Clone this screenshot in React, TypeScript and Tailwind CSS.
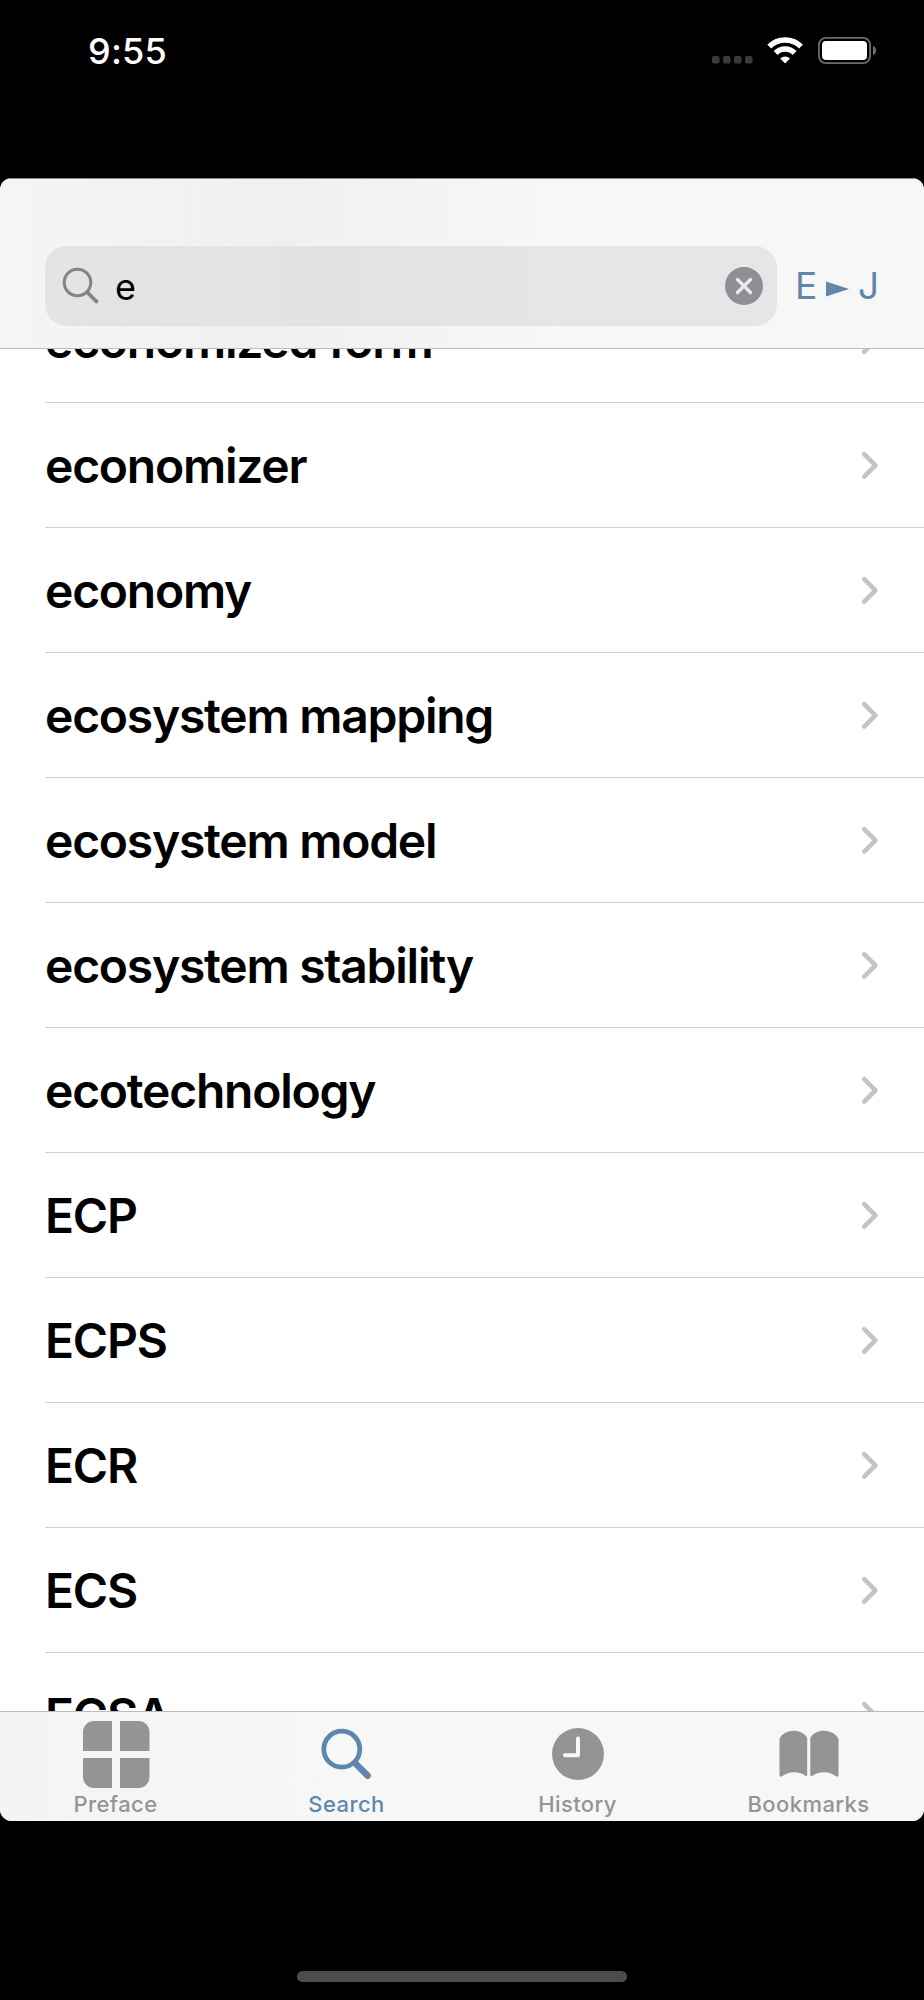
import { useState } from "react";

const ENTRIES = [
  "economized form",
  "economizer",
  "economy",
  "ecosystem mapping",
  "ecosystem model",
  "ecosystem stability",
  "ecotechnology",
  "ECP",
  "ECPS",
  "ECR",
  "ECS",
  "ECSA",
];

function StatusBar() {
  return (
    <div className="flex h-[178px] items-start justify-between bg-black pl-[88px] pr-[48px] text-white">
      <span className="mt-[30px] text-[36px] font-medium leading-[42px] tracking-[0.2px]">9:55</span>
      <svg className="mt-[30px]" width="166" height="42" viewBox="710 30 166 42" fill="none">
        <g fill="#3b3b3b">
          <rect x="712" y="56" width="7.5" height="7.5" rx="2" />
          <rect x="723" y="56" width="7.5" height="7.5" rx="2" />
          <rect x="734" y="56" width="7.5" height="7.5" rx="2" />
          <rect x="745" y="56" width="7.5" height="7.5" rx="2" />
        </g>
        <g stroke="#fff" strokeWidth="5.4">
          <path d="M769.2 46.5a22.6 22.6 0 0 1 31.8 0" />
          <path d="M775.6 53a13.4 13.4 0 0 1 19 0" />
        </g>
        <path d="M785.1 63.4l-4.9-5a7 7 0 0 1 9.8 0z" fill="#fff" />
        <rect x="818.9" y="37.9" width="51.2" height="25.2" rx="7" stroke="#6d6d6d" strokeWidth="1.8" />
        <rect x="822" y="41" width="45" height="19" rx="4" fill="#fff" />
        <path d="M873 46c4.2 1.6 4.2 7.4 0 9z" fill="#6d6d6d" />
      </svg>
    </div>
  );
}

function Chevron() {
  return (
    <svg width="20" height="32" viewBox="0 0 20 32" fill="none" stroke="#c4c4c6" strokeWidth="4.6" strokeLinecap="round" strokeLinejoin="round">
      <path d="M4.2 5.2L15.4 16.4L4.2 27.6" />
    </svg>
  );
}

const TABS = [
  {
    label: "Preface",
    icon: (
      <svg width="68" height="68" viewBox="0 0 68 68" fill="currentColor">
        <path d="M12 0h18v30H1V11A11 11 0 0 1 12 0z" />
        <path d="M38 0h18.5a11 11 0 0 1 11 11v19H38z" />
        <path d="M1 37h29v30H12A11 11 0 0 1 1 56z" />
        <path d="M38 37h29.5v19a11 11 0 0 1-11 11H38z" />
      </svg>
    ),
  },
  {
    label: "Search",
    icon: (
      <svg width="68" height="68" viewBox="0 0 68 68" fill="none" stroke="currentColor" strokeLinecap="round">
        <circle cx="28.8" cy="28.2" r="18" strokeWidth="4.8" />
        <path d="M42.5 42.5L54.6 54.6" strokeWidth="6.6" />
      </svg>
    ),
  },
  {
    label: "History",
    icon: (
      <svg width="68" height="68" viewBox="0 0 68 68" fill="none">
        <circle cx="34" cy="33" r="26" fill="currentColor" />
        <path d="M34 17.5V34.2H21" stroke="#f7f7f7" strokeWidth="4" strokeLinecap="round" strokeLinejoin="round" />
      </svg>
    ),
  },
  {
    label: "Bookmarks",
    icon: (
      <svg width="68" height="68" viewBox="0 0 68 68" fill="currentColor">
        <path d="M4.5 18C9 7.5 27 7 32.2 17V53.5Q32.2 56 30 54.5C24 50 13 50 7.5 55Q4.5 57 4.5 54z" />
        <path d="M35.3 17C40.5 7 58.5 7.5 63.5 18V54Q63.5 57 60.5 55C55 50 44 50 38 54.5Q35.3 56 35.3 53.5z" />
      </svg>
    ),
  },
];

export default function App() {
  const [query, setQuery] = useState("e");
  const [tab, setTab] = useState("Search");

  return (
    <div className="h-[2000px] w-[924px] overflow-hidden bg-black font-['Inter',sans-serif]">
      <StatusBar />

      <div className="flex h-[1643px] flex-col overflow-hidden rounded-[12px] bg-white">
        <header className="flex h-[171px] shrink-0 items-start border-t border-b border-t-[#8a8a8a] border-b-[#bcbcbc] bg-linear-to-r from-[#f5f5f5] via-[#f0f0f0] via-30% to-[#f7f7f7] to-60% pt-[67px] pl-[45px]">
          <div className="flex h-[80px] w-[732px] items-center rounded-[22px] bg-linear-to-r from-[#e4e4e4] via-[#e2e2e2] via-40% to-[#e6e6e8] to-70% pl-[17px] pr-[14px]">
            <svg width="38" height="38" viewBox="0 0 38 38" fill="none" stroke="#848488" strokeLinecap="round">
              <circle cx="15.5" cy="15.5" r="13.3" strokeWidth="3" />
              <path d="M25.5 25.5L34.5 34.5" strokeWidth="3.8" />
            </svg>
            <input
              value={query}
              onChange={(e) => setQuery(e.target.value)}
              className="ml-[15px] h-[60px] min-w-0 flex-1 bg-transparent pt-[2px] text-[36px] text-black outline-none"
            />
            <button onClick={() => setQuery("")} aria-label="Clear">
              <svg width="38" height="38" viewBox="0 0 38 38" fill="none">
                <circle cx="19" cy="19" r="19" fill="#8e8e93" />
                <path d="M12.5 12.5l13 13m0-13l-13 13" stroke="#e9e9eb" strokeWidth="3.4" strokeLinecap="round" />
              </svg>
            </button>
          </div>
          <button className="ml-[18px] flex h-[80px] items-center text-[37px] font-normal text-[#5f87ac]">
            <span className="w-[22px]">E</span>
            <svg className="mt-[6px] ml-[9px] mr-[9px]" width="23" height="16" viewBox="0 0 23 16" fill="currentColor">
              <path d="M0 0.5L23 8L0 15.5z" />
            </svg>
            <span>J</span>
          </button>
        </header>

        <main className="flex min-h-0 flex-1 flex-col justify-start overflow-hidden">
          <ul className="-mt-[71px]">
            {ENTRIES.map((entry) => (
              <li key={entry} className="ml-[45px] flex h-[125px] items-center justify-between border-b border-[#d0d0d2] pr-[44px]">
                <span className="pt-[2px] text-[48px] leading-[60px] font-semibold tracking-[-1.25px] text-black">{entry}</span>
                <Chevron />
              </li>
            ))}
          </ul>
        </main>

        <nav className="grid h-[110px] shrink-0 grid-cols-4 border-t border-[#bcbcbc] bg-linear-to-r from-[#f4f4f4] to-[#f7f7f7] to-40%">
          {TABS.map(({ label, icon }) => (
            <button
              key={label}
              onClick={() => setTab(label)}
              className={`flex flex-col items-center pt-[9px] ${tab === label ? "text-[#5f87ac]" : "text-[#949494]"}`}
            >
              {icon}
              <span className="mt-[2px] text-[22px] leading-[26px] font-medium tracking-[0.4px]">{label}</span>
            </button>
          ))}
        </nav>
      </div>

      <div className="mx-auto mt-[150px] h-[11px] w-[330px] rounded-full bg-[#4c4c4c]" />
    </div>
  );
}
